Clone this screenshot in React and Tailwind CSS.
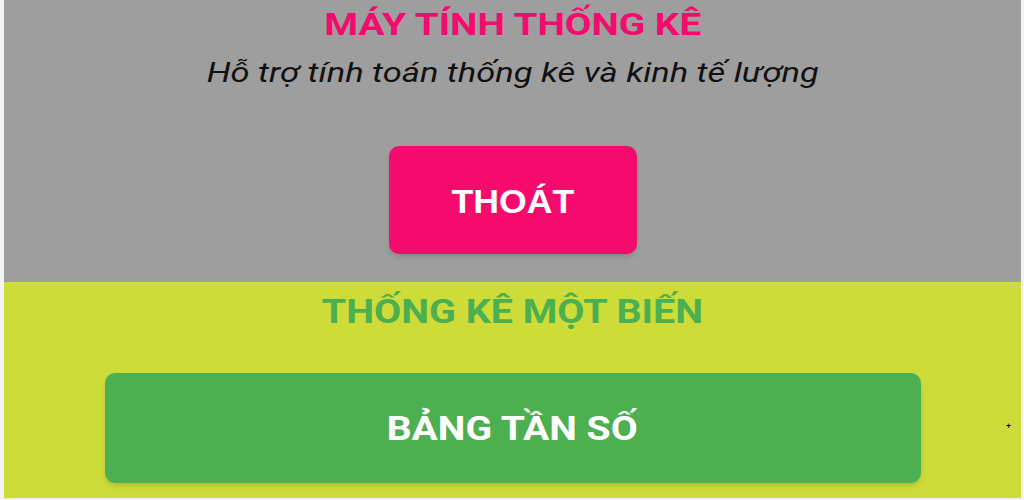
export default function App() {
  return (
    <div className="w-[1024px] h-[500px] flex bg-white overflow-hidden" style={{ fontFamily: 'Roboto, "Noto Sans", sans-serif' }}>
      <div className="w-[4px] bg-[#f4f4f4]" />
      <div className="flex-1 flex flex-col">
        <section className="h-[282px] bg-[#9e9e9e] flex flex-col items-center">
          <h1 className="pt-[7px] text-[31px] leading-[36px] font-bold text-[#f50a6e] scale-x-[1.25]">
            MÁY TÍNH THỐNG KÊ
          </h1>
          <p className="mt-[13px] text-[28px] leading-[34px] italic text-[#111] scale-x-[1.23]">
            Hỗ trợ tính toán thống kê và kinh tế lượng
          </p>
          <button className="mt-[56px] w-[248px] h-[108px] pt-[4px] rounded-[10px] bg-[#f50a6e] shadow-md flex items-center justify-center">
            <span className="text-white font-bold text-[33px] scale-x-[1.08]" style={{ fontFamily: '"Liberation Sans", Arial, sans-serif' }}>
              THOÁT
            </span>
          </button>
        </section>
        <section className="relative flex-1 bg-[#cddc39] flex flex-col items-center">
          <h2 className="pt-[9px] text-[34px] leading-[40px] font-bold text-[#4caf50] scale-x-[1.16]">
            THỐNG KÊ MỘT BIẾN
          </h2>
          <button className="mt-[42px] w-[816px] h-[110px] rounded-[10px] bg-[#4caf50] shadow-md flex items-center justify-center">
            <span className="text-white font-bold text-[34px] scale-x-[1.15]">BẢNG TẦN SỐ</span>
          </button>
          <span className="absolute right-[10px] top-[140px] text-[9px] leading-none text-black">+</span>
        </section>
        <div className="h-[2px] bg-[#f0f0f0]" />
      </div>
      <div className="w-[3px] bg-[#f4f4f4]" />
    </div>
  );
}
